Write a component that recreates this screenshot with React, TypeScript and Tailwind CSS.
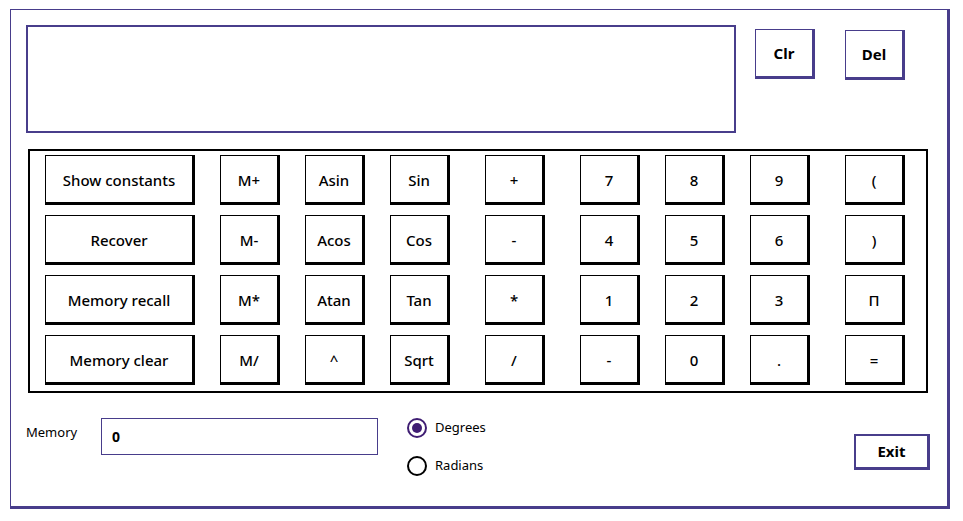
const rows: string[][] = [
  ["Show constants", "M+", "Asin", "Sin", "+", "7", "8", "9", "("],
  ["Recover", "M-", "Acos", "Cos", "-", "4", "5", "6", ")"],
  ["Memory recall", "M*", "Atan", "Tan", "*", "1", "2", "3", "Π"],
  ["Memory clear", "M/", "^", "Sqrt", "/", "-", "0", ".", "="],
];

// left margin before each column, the spacing in the form is not even
const colGap = ["ml-0", "ml-[25px]", "ml-[25px]", "ml-[25px]", "ml-[35px]", "ml-[35px]", "ml-[25px]", "ml-[25px]", "ml-[35px]"];

function Key({ label, wide, gap }: { label: string; wide?: boolean; gap: string }) {
  return (
    <button
      className={`${gap} ${wide ? "w-[150px]" : "w-[60px]"} flex h-[50px] items-center justify-center border-l border-t border-r-[3px] border-b-[3px] border-black bg-white pt-[2px] text-[15px] font-medium text-black`}
    >
      {label}
    </button>
  );
}

export default function App() {
  return (
    <div className="h-[521px] w-[963px] bg-white pl-[10px] pt-[9px] font-['Noto_Sans',sans-serif] text-black">
      <div className="flex h-[500px] w-[940px] flex-col border-l border-t border-r-[3px] border-b-[3px] border-[#483d8b] pl-[15px] pt-[15px]">
        <div className="flex items-start">
          <div className="h-[108px] w-[710px] border-2 border-[#483d8b]" />
          <button className="ml-[19px] mt-[4px] flex h-[50px] w-[60px] items-center justify-center border-l border-t border-r-[3px] border-b-[3px] border-[#483d8b] bg-white pt-[1px] text-[15px] font-bold">
            Clr
          </button>
          <button className="ml-[30px] mt-[5px] flex h-[50px] w-[60px] items-center justify-center border-l border-t border-r-[3px] border-b-[3px] border-[#483d8b] bg-white pt-[1px] text-[15px] font-bold">
            Del
          </button>
        </div>

        <div className="ml-[2px] mt-[16px] flex h-[244px] w-[900px] flex-col gap-[10px] border-2 border-black pl-[15px] pt-[4px]">
          {rows.map((r, i) => (
            <div key={i} className="flex">
              {r.map((k, c) => (
                <Key key={c} label={k} wide={c === 0} gap={colGap[c]} />
              ))}
            </div>
          ))}
        </div>

        <div className="mt-[25px] flex items-start">
          <span className="mt-[5px] w-[75px] text-[13px]">Memory</span>
          <div className="flex h-[37px] w-[277px] items-center border border-[#483d8b] pl-[10px] text-[14px] font-bold">
            0
          </div>
          <div className="ml-[29px] flex flex-col gap-[18px]">
            <label className="flex items-center gap-[8px] text-[13px]">
              <span className="flex h-[20px] w-[20px] items-center justify-center rounded-full border-2 border-[#3f1d73]">
                <span className="h-[10px] w-[10px] rounded-full bg-[#3f1d73]" />
              </span>
              Degrees
            </label>
            <label className="flex items-center gap-[8px] text-[13px]">
              <span className="h-[20px] w-[20px] rounded-full border-2 border-black" />
              Radians
            </label>
          </div>
          <button className="ml-auto mr-[17px] mt-[16px] flex h-[36px] w-[76px] items-center justify-center border-l-2 border-t-2 border-r-[3px] border-b-[3px] border-[#483d8b] bg-white text-[15px] font-bold">
            Exit
          </button>
        </div>
      </div>
    </div>
  );
}
